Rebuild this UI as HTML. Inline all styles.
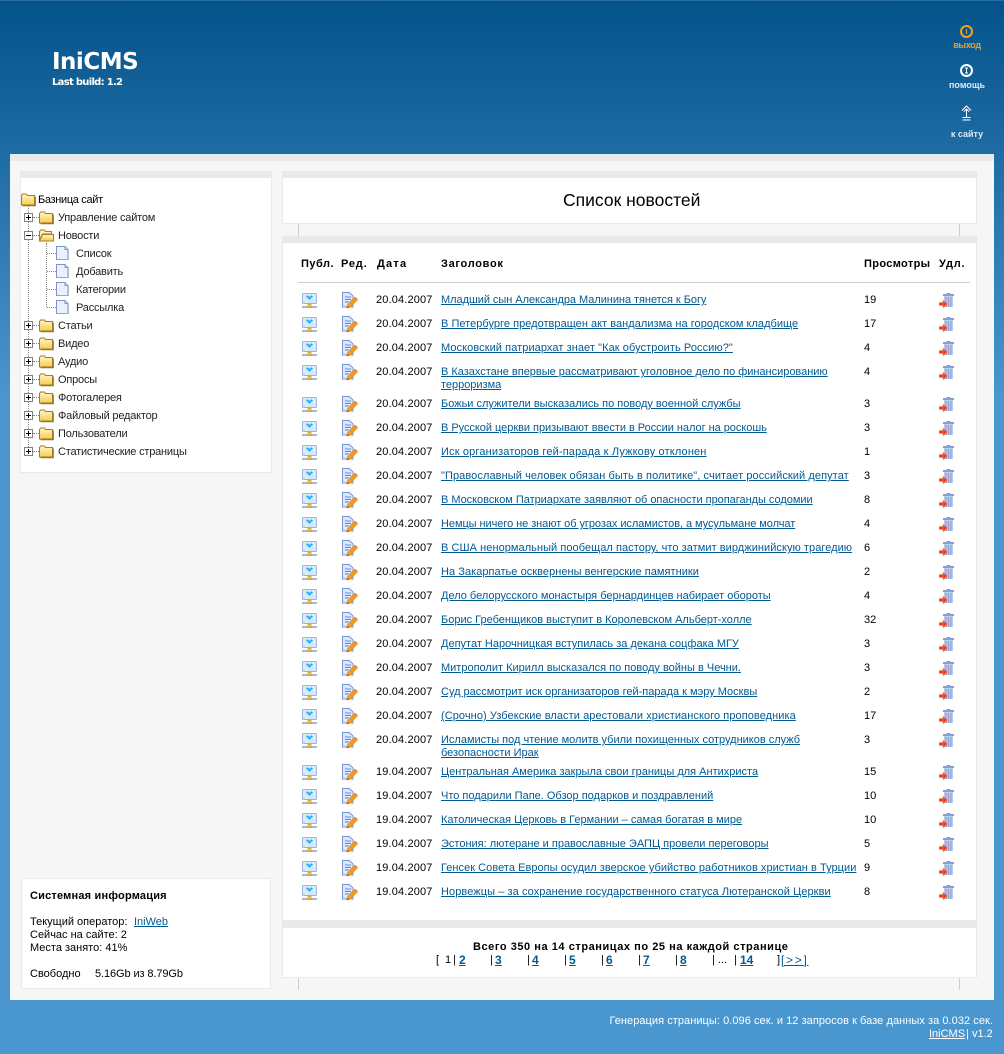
<!DOCTYPE html>
<html lang="ru"><head><meta charset="utf-8"><title>IniCMS</title>
<style>
html,body{margin:0;padding:0}
body{width:1004px;height:1054px;position:relative;overflow:hidden;background:#4a96cf linear-gradient(#04528a 0,#4a96cf 400px) no-repeat;background-size:100% 400px;font:11px/13px "Liberation Sans",sans-serif;color:#000}
div,span,a,svg{position:absolute}
a{color:#005a94;text-decoration:underline;white-space:nowrap}
.t{white-space:nowrap}
.box{background:#fff;border:1px solid #e9e9e9;box-sizing:border-box}
.bar{background:#e9e9e9;height:7px}
.tick{width:1px;background:#ccc}
.h{font-weight:bold;top:258px;white-space:nowrap;font-size:11px;letter-spacing:.35px}
.r{left:0;width:1004px;height:13px}
.d{left:376px;top:1px;letter-spacing:.15px}
.l{left:441px;top:1px}
.c{left:864px;top:1px}
.i1{left:302px;top:0;width:16px;height:16px}
.i2{left:342px;top:-1px;width:16px;height:17px}
.i3{left:939px;top:0;width:16px;height:16px}
.nav{font-weight:bold;font-size:9px;line-height:11px;width:70px;text-align:center;left:932px;color:#dfeaf4;white-space:nowrap}
.tr{left:58px;white-space:nowrap;color:#222;letter-spacing:-.2px}
.dv{border-left:1px dotted #888;width:0}
.dh{border-top:1px dotted #888;height:0}
.pl{width:9px;height:9px;left:24px}
.f{width:15px;height:14px}
.p{top:954px;white-space:nowrap}
.b{font-weight:bold;font-size:12px}
</style></head><body>
<svg width="0" height="0" style="left:0;top:0">
<defs>
<linearGradient id="fg" x1="0" y1="0" x2="0" y2="1"><stop offset="0" stop-color="#fff6c4"/><stop offset="1" stop-color="#f6cc55"/></linearGradient>
<symbol id="pub" viewBox="0 0 16 16"><rect x=".5" y=".5" width="14" height="10" rx="1" fill="#d6eafb" stroke="#9db5d8"/><path d="M4.500 3.500l3 3 3-3-1.200-.7-1.800 1.300-1.800-1.300z" fill="#36b0ee" stroke="#36b0ee" stroke-width=".7"/><rect x="0" y="13" width="15" height="2" fill="#b5b5b5"/><rect x="6" y="11" width="3" height="3.500" fill="#f4c95a" stroke="#c8902a" stroke-width=".7"/></symbol>
<symbol id="ed" viewBox="0 0 16 17"><path d="M.5.5H7.500L11 4V15H.5z" fill="#dbe8fb" stroke="#7b93d4"/><path d="M3 5h6M3 7.500h6M3 10h4" stroke="#6a88d0"/><path d="M5 16l.6-3.400 7.400-7.600 2.700 2.600-7.400 7.400z" fill="#f59a1f" stroke="#e07d10" stroke-width=".6"/><path d="M5 16l.6-2 1.400 1.400z" fill="#7a4a10"/></symbol>
<symbol id="del" viewBox="0 0 16 16"><rect x="4" y="1" width="11" height="2" fill="#8c9fca"/><rect x="7.500" y="0" width="4" height="1.500" fill="#8c9fca"/><path d="M5 3H14V14H5z" fill="#bccaea"/><path d="M7 4v10M9.500 4v10M12 4v10" stroke="#8a9cca"/><path d="M0 9.500h4V7l4.500 4L4 15v-2.500H0z" fill="#f0421c" stroke="#f78a60" stroke-width=".5"/></symbol>
<symbol id="fo" viewBox="0 0 15 14"><path d="M.5 2.500l1-1.500H5.500l1 1.500H13.500V12H.5z" fill="url(#fg)" stroke="#a87b1e"/><path d="M14.500 3.500V12.800H1.500" fill="none" stroke="#8a7430" stroke-width=".8"/></symbol>
<symbol id="fop" viewBox="0 0 15 14"><path d="M.5 2.500l1-1.500H5.500l1 1.500H12.500V5H3.500L.5 11z" fill="#fdf0b8" stroke="#a87b1e"/><path d="M.5 12L3.500 5.500H14.500V12z" fill="url(#fg)" stroke="#a87b1e"/></symbol>
<symbol id="pg" viewBox="0 0 13 14"><path d="M.5.5H9L12 3.500V13.500H.5z" fill="#eaf1fd" stroke="#8094c8"/><path d="M9 .5V3.500H12" fill="#c8d6f2" stroke="#8094c8"/><path d="M12.500 4V14H1.500" fill="none" stroke="#aeb8d0"/></symbol>
<symbol id="plus" viewBox="0 0 9 9"><rect x=".5" y=".5" width="8" height="8" fill="#fff" stroke="#808080"/><path d="M2 4.500h5M4.500 2v5" stroke="#000"/></symbol>
<symbol id="minus" viewBox="0 0 9 9"><rect x=".5" y=".5" width="8" height="8" fill="#fff" stroke="#808080"/><path d="M2 4.500h5" stroke="#000"/></symbol>
</defs></svg>

<div style="left:0;top:0;width:1004px;height:1px;background:#2a6c9e"></div>
<div class="t" style="left:52px;top:47px;font:bold 23px/30px 'DejaVu Sans',sans-serif;color:#fff;letter-spacing:-.5px">IniCMS</div>
<div class="t" style="left:52px;top:76px;font:bold 10px/13px 'DejaVu Sans',sans-serif;color:#fff;letter-spacing:-.7px">Last build: 1.2</div>

<svg style="left:960px;top:25px" width="14" height="14" viewBox="0 0 14 14"><circle cx="6.500" cy="6.500" r="5.500" fill="none" stroke="#f0a020" stroke-width="2"/><path d="M6.500 4v5" stroke="#f0a020"/></svg>
<div class="nav" style="top:40px;color:#f0a020;letter-spacing:-.3px">выход</div>
<svg style="left:960px;top:64px" width="14" height="14" viewBox="0 0 14 14"><circle cx="6.500" cy="6.500" r="5.500" fill="none" stroke="#fff" stroke-width="2"/><path d="M5 4h3M6.500 4v5M5 9h3" stroke="#fff"/></svg>
<div class="nav" style="top:80px">помощь</div>
<svg style="left:961px;top:105px" width="11" height="16" viewBox="0 0 11 16"><path d="M1 5.500L5.500 1 10 5.500M3 6.500L5.500 4 8 6.500M5.500 5v7M1.500 12.500h8M1.500 15h8" fill="none" stroke="#fff"/></svg>
<div class="nav" style="top:129px;left:932px">к сайту</div>

<div style="left:10px;top:154px;width:984px;height:846px;background:#f6f6f6"></div>
<div style="left:10px;top:154px;width:984px;height:7px;background:#e9e9e9"></div>

<div class="box" style="left:20px;top:171px;width:252px;height:302px"></div>
<div class="bar" style="left:20px;top:171px;width:252px"></div>

<div class="dv" style="left:28px;top:206px;height:245px"></div>
<div class="dv" style="left:46px;top:243px;height:64px"></div>
<div class="dh" style="left:47px;top:253px;width:9px"></div>
<div class="dh" style="left:47px;top:271px;width:9px"></div>
<div class="dh" style="left:47px;top:289px;width:9px"></div>
<div class="dh" style="left:47px;top:307px;width:9px"></div>
<svg class="f" style="left:21px;top:193px"><use href="#fo"/></svg>
<span class="t" style="left:38px;top:194px;letter-spacing:-.33px">Базница сайт</span>

<div class="dh" style="left:33px;top:217px;width:6px"></div><svg class="pl" style="top:213px"><use href="#plus"/></svg><svg class="f" style="left:39px;top:211px"><use href="#fo"/></svg><span class="tr" style="top:212px">Управление сайтом</span>
<div class="dh" style="left:33px;top:235px;width:6px"></div><svg class="pl" style="top:231px"><use href="#minus"/></svg><svg class="f" style="left:39px;top:229px"><use href="#fop"/></svg><span class="tr" style="top:230px">Новости</span>
<svg style="left:56px;top:246px;width:13px;height:14px"><use href="#pg"/></svg><span class="tr" style="left:76px;top:248px">Список</span>
<svg style="left:56px;top:264px;width:13px;height:14px"><use href="#pg"/></svg><span class="tr" style="left:76px;top:266px">Добавить</span>
<svg style="left:56px;top:282px;width:13px;height:14px"><use href="#pg"/></svg><span class="tr" style="left:76px;top:284px">Категории</span>
<svg style="left:56px;top:300px;width:13px;height:14px"><use href="#pg"/></svg><span class="tr" style="left:76px;top:302px">Рассылка</span>
<div class="dh" style="left:33px;top:325px;width:6px"></div><svg class="pl" style="top:321px"><use href="#plus"/></svg><svg class="f" style="left:39px;top:319px"><use href="#fo"/></svg><span class="tr" style="top:320px">Статьи</span>
<div class="dh" style="left:33px;top:343px;width:6px"></div><svg class="pl" style="top:339px"><use href="#plus"/></svg><svg class="f" style="left:39px;top:337px"><use href="#fo"/></svg><span class="tr" style="top:338px">Видео</span>
<div class="dh" style="left:33px;top:361px;width:6px"></div><svg class="pl" style="top:357px"><use href="#plus"/></svg><svg class="f" style="left:39px;top:355px"><use href="#fo"/></svg><span class="tr" style="top:356px">Аудио</span>
<div class="dh" style="left:33px;top:379px;width:6px"></div><svg class="pl" style="top:375px"><use href="#plus"/></svg><svg class="f" style="left:39px;top:373px"><use href="#fo"/></svg><span class="tr" style="top:374px">Опросы</span>
<div class="dh" style="left:33px;top:397px;width:6px"></div><svg class="pl" style="top:393px"><use href="#plus"/></svg><svg class="f" style="left:39px;top:391px"><use href="#fo"/></svg><span class="tr" style="top:392px">Фотогалерея</span>
<div class="dh" style="left:33px;top:415px;width:6px"></div><svg class="pl" style="top:411px"><use href="#plus"/></svg><svg class="f" style="left:39px;top:409px"><use href="#fo"/></svg><span class="tr" style="top:410px">Файловый редактор</span>
<div class="dh" style="left:33px;top:433px;width:6px"></div><svg class="pl" style="top:429px"><use href="#plus"/></svg><svg class="f" style="left:39px;top:427px"><use href="#fo"/></svg><span class="tr" style="top:428px">Пользователи</span>
<div class="dh" style="left:33px;top:451px;width:6px"></div><svg class="pl" style="top:447px"><use href="#plus"/></svg><svg class="f" style="left:39px;top:445px"><use href="#fo"/></svg><span class="tr" style="top:446px">Статистические страницы</span>

<div class="box" style="left:21px;top:878px;width:250px;height:111px"></div>
<div class="t" style="left:30px;top:890px;font-weight:bold;letter-spacing:.2px">Системная информация</div>
<div class="t" style="left:30px;top:916px">Текущий оператор: </div><a style="left:134px;top:916px">IniWeb</a>
<div class="t" style="left:30px;top:929px">Сейчас на сайте: 2</div>
<div class="t" style="left:30px;top:942px">Места занято: 41%</div>
<div class="t" style="left:30px;top:968px">Свободно</div>
<div class="t" style="left:95px;top:968px;letter-spacing:-.1px">5.16Gb из 8.79Gb</div>

<div class="box" style="left:282px;top:171px;width:695px;height:53px"></div>
<div class="bar" style="left:282px;top:171px;width:695px"></div>
<div class="t" style="left:563px;top:188px;font-size:17.5px;line-height:24px">Список новостей</div>
<div class="tick" style="left:298px;top:224px;height:12px"></div>
<div class="tick" style="left:959px;top:224px;height:12px"></div>

<div class="box" style="left:282px;top:236px;width:695px;height:742px"></div>
<div class="bar" style="left:282px;top:236px;width:695px"></div>
<div class="h" style="left:301px;letter-spacing:.5px">Публ.</div>
<div class="h" style="left:341px;letter-spacing:.8px">Ред.</div>
<div class="h" style="left:377px;letter-spacing:1.2px">Дата</div>
<div class="h" style="left:441px;letter-spacing:.7px">Заголовок</div>
<div class="h" style="left:864px">Просмотры</div>
<div class="h" style="left:939px;letter-spacing:.8px">Удл.</div>
<div style="left:298px;top:282px;width:672px;height:1px;background:#ccc"></div>

<div class="r" style="top:293px"><svg class="i1"><use href="#pub"/></svg><svg class="i2"><use href="#ed"/></svg><span class="d">20.04.2007</span><a class="l" style="letter-spacing:-.045px">Младший сын Александра Малинина тянется к Богу</a><span class="c">19</span><svg class="i3"><use href="#del"/></svg></div>
<div class="r" style="top:317px"><svg class="i1"><use href="#pub"/></svg><svg class="i2"><use href="#ed"/></svg><span class="d">20.04.2007</span><a class="l" style="letter-spacing:.03px">В Петербурге предотвращен акт вандализма на городском кладбище</a><span class="c">17</span><svg class="i3"><use href="#del"/></svg></div>
<div class="r" style="top:341px"><svg class="i1"><use href="#pub"/></svg><svg class="i2"><use href="#ed"/></svg><span class="d">20.04.2007</span><a class="l" style="letter-spacing:.075px">Московский патриархат знает "Как обустроить Россию?"</a><span class="c">4</span><svg class="i3"><use href="#del"/></svg></div>
<div class="r" style="top:365px"><svg class="i1"><use href="#pub"/></svg><svg class="i2"><use href="#ed"/></svg><span class="d">20.04.2007</span><a class="l" style="letter-spacing:-.015px">В Казахстане впервые рассматривают уголовное дело по финансированию<br>терроризма</a><span class="c">4</span><svg class="i3"><use href="#del"/></svg></div>
<div class="r" style="top:397px"><svg class="i1"><use href="#pub"/></svg><svg class="i2"><use href="#ed"/></svg><span class="d">20.04.2007</span><a class="l">Божьи служители высказались по поводу военной службы</a><span class="c">3</span><svg class="i3"><use href="#del"/></svg></div>
<div class="r" style="top:421px"><svg class="i1"><use href="#pub"/></svg><svg class="i2"><use href="#ed"/></svg><span class="d">20.04.2007</span><a class="l" style="letter-spacing:-.035px">В Русской церкви призывают ввести в России налог на роскошь</a><span class="c">3</span><svg class="i3"><use href="#del"/></svg></div>
<div class="r" style="top:445px"><svg class="i1"><use href="#pub"/></svg><svg class="i2"><use href="#ed"/></svg><span class="d">20.04.2007</span><a class="l" style="letter-spacing:.15px">Иск организаторов гей-парада к Лужкову отклонен</a><span class="c">1</span><svg class="i3"><use href="#del"/></svg></div>
<div class="r" style="top:469px"><svg class="i1"><use href="#pub"/></svg><svg class="i2"><use href="#ed"/></svg><span class="d">20.04.2007</span><a class="l" style="letter-spacing:.08px">"Православный человек обязан быть в политике", считает российский депутат</a><span class="c">3</span><svg class="i3"><use href="#del"/></svg></div>
<div class="r" style="top:493px"><svg class="i1"><use href="#pub"/></svg><svg class="i2"><use href="#ed"/></svg><span class="d">20.04.2007</span><a class="l" style="letter-spacing:-.03px">В Московском Патриархате заявляют об опасности пропаганды содомии</a><span class="c">8</span><svg class="i3"><use href="#del"/></svg></div>
<div class="r" style="top:517px"><svg class="i1"><use href="#pub"/></svg><svg class="i2"><use href="#ed"/></svg><span class="d">20.04.2007</span><a class="l" style="letter-spacing:-.06px">Немцы ничего не знают об угрозах исламистов, а мусульмане молчат</a><span class="c">4</span><svg class="i3"><use href="#del"/></svg></div>
<div class="r" style="top:541px"><svg class="i1"><use href="#pub"/></svg><svg class="i2"><use href="#ed"/></svg><span class="d">20.04.2007</span><a class="l" style="letter-spacing:.055px">В США ненормальный пообещал пастору, что затмит вирджинийскую трагедию</a><span class="c">6</span><svg class="i3"><use href="#del"/></svg></div>
<div class="r" style="top:565px"><svg class="i1"><use href="#pub"/></svg><svg class="i2"><use href="#ed"/></svg><span class="d">20.04.2007</span><a class="l" style="letter-spacing:.045px">На Закарпатье осквернены венгерские памятники</a><span class="c">2</span><svg class="i3"><use href="#del"/></svg></div>
<div class="r" style="top:589px"><svg class="i1"><use href="#pub"/></svg><svg class="i2"><use href="#ed"/></svg><span class="d">20.04.2007</span><a class="l">Дело белорусского монастыря бернардинцев набирает обороты</a><span class="c">4</span><svg class="i3"><use href="#del"/></svg></div>
<div class="r" style="top:613px"><svg class="i1"><use href="#pub"/></svg><svg class="i2"><use href="#ed"/></svg><span class="d">20.04.2007</span><a class="l">Борис Гребенщиков выступит в Королевском Альберт-холле</a><span class="c">32</span><svg class="i3"><use href="#del"/></svg></div>
<div class="r" style="top:637px"><svg class="i1"><use href="#pub"/></svg><svg class="i2"><use href="#ed"/></svg><span class="d">20.04.2007</span><a class="l">Депутат Нарочницкая вступилась за декана соцфака МГУ</a><span class="c">3</span><svg class="i3"><use href="#del"/></svg></div>
<div class="r" style="top:661px"><svg class="i1"><use href="#pub"/></svg><svg class="i2"><use href="#ed"/></svg><span class="d">20.04.2007</span><a class="l">Митрополит Кирилл высказался по поводу войны в Чечни.</a><span class="c">3</span><svg class="i3"><use href="#del"/></svg></div>
<div class="r" style="top:685px"><svg class="i1"><use href="#pub"/></svg><svg class="i2"><use href="#ed"/></svg><span class="d">20.04.2007</span><a class="l">Суд рассмотрит иск организаторов гей-парада к мэру Москвы</a><span class="c">2</span><svg class="i3"><use href="#del"/></svg></div>
<div class="r" style="top:709px"><svg class="i1"><use href="#pub"/></svg><svg class="i2"><use href="#ed"/></svg><span class="d">20.04.2007</span><a class="l" style="letter-spacing:.07px">(Срочно) Узбекские власти арестовали христианского проповедника</a><span class="c">17</span><svg class="i3"><use href="#del"/></svg></div>
<div class="r" style="top:733px"><svg class="i1"><use href="#pub"/></svg><svg class="i2"><use href="#ed"/></svg><span class="d">20.04.2007</span><a class="l">Исламисты под чтение молитв убили похищенных сотрудников служб<br>безопасности Ирак</a><span class="c">3</span><svg class="i3"><use href="#del"/></svg></div>
<div class="r" style="top:765px"><svg class="i1"><use href="#pub"/></svg><svg class="i2"><use href="#ed"/></svg><span class="d">19.04.2007</span><a class="l">Центральная Америка закрыла свои границы для Антихриста</a><span class="c">15</span><svg class="i3"><use href="#del"/></svg></div>
<div class="r" style="top:789px"><svg class="i1"><use href="#pub"/></svg><svg class="i2"><use href="#ed"/></svg><span class="d">19.04.2007</span><a class="l">Что подарили Папе. Обзор подарков и поздравлений</a><span class="c">10</span><svg class="i3"><use href="#del"/></svg></div>
<div class="r" style="top:813px"><svg class="i1"><use href="#pub"/></svg><svg class="i2"><use href="#ed"/></svg><span class="d">19.04.2007</span><a class="l">Католическая Церковь в Германии – самая богатая в мире</a><span class="c">10</span><svg class="i3"><use href="#del"/></svg></div>
<div class="r" style="top:837px"><svg class="i1"><use href="#pub"/></svg><svg class="i2"><use href="#ed"/></svg><span class="d">19.04.2007</span><a class="l">Эстония: лютеране и православные ЭАПЦ провели переговоры</a><span class="c">5</span><svg class="i3"><use href="#del"/></svg></div>
<div class="r" style="top:861px"><svg class="i1"><use href="#pub"/></svg><svg class="i2"><use href="#ed"/></svg><span class="d">19.04.2007</span><a class="l" style="letter-spacing:.04px">Генсек Совета Европы осудил зверское убийство работников христиан в Турции</a><span class="c">9</span><svg class="i3"><use href="#del"/></svg></div>
<div class="r" style="top:885px"><svg class="i1"><use href="#pub"/></svg><svg class="i2"><use href="#ed"/></svg><span class="d">19.04.2007</span><a class="l" style="letter-spacing:.075px">Норвежцы – за сохранение государственного статуса Лютеранской Церкви</a><span class="c">8</span><svg class="i3"><use href="#del"/></svg></div>

<div style="left:283px;top:920px;width:693px;height:8px;background:#e9e9e9"></div>
<div class="t" style="left:473px;top:941px;font-weight:bold;letter-spacing:.55px">Всего 350 на 14 страницах по 25 на каждой странице</div>
<span class="p" style="left:436px">[</span><span class="p" style="left:445px">1</span>
<span class="p" style="left:453px">|</span><a class="p b" style="left:459px">2</a>
<span class="p" style="left:490px">|</span><a class="p b" style="left:495px">3</a>
<span class="p" style="left:527px">|</span><a class="p b" style="left:532px">4</a>
<span class="p" style="left:564px">|</span><a class="p b" style="left:569px">5</a>
<span class="p" style="left:601px">|</span><a class="p b" style="left:606px">6</a>
<span class="p" style="left:638px">|</span><a class="p b" style="left:643px">7</a>
<span class="p" style="left:675px">|</span><a class="p b" style="left:680px">8</a>
<span class="p" style="left:712px">|</span><span class="p" style="left:718px">...</span>
<span class="p" style="left:734px">|</span><a class="p b" style="left:740px">14</a>
<span class="p" style="left:777px">]</span><a class="p" style="left:781px;font-size:12px;letter-spacing:1.7px">[&gt;&gt;]</a>
<div class="tick" style="left:298px;top:978px;height:12px"></div>
<div class="tick" style="left:959px;top:978px;height:12px"></div>

<div class="t" style="right:11px;top:1015px;color:#fff;letter-spacing:.055px">Генерация страницы: 0.096 сек. и 12 запросов к базе данных за 0.032 сек.</div>
<a style="left:929px;top:1028px;color:#fff">IniCMS</a><span class="t" style="left:966px;top:1028px;color:#fff">|</span><span class="t" style="left:972px;top:1028px;color:#fff">v1.2</span>
</body></html>
